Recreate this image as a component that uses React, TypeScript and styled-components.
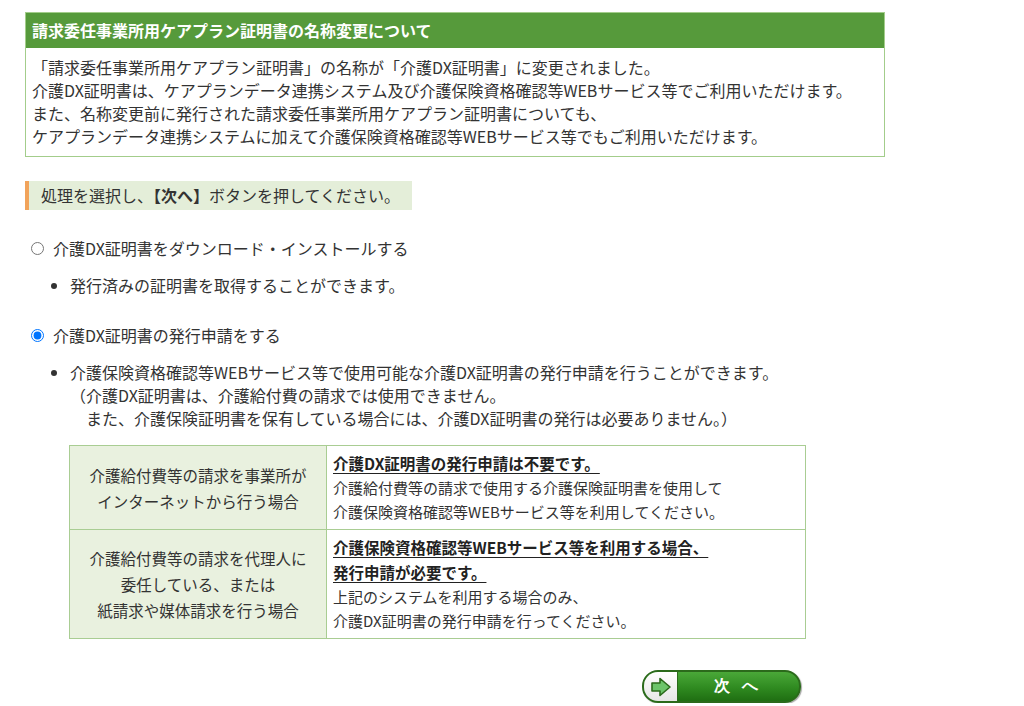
import styled, { createGlobalStyle } from "styled-components";

const GlobalStyle = createGlobalStyle`
  body {
    margin: 0;
    background: #fff;
    color: #333;
    font-family: "Noto Sans CJK JP", "Noto Sans", sans-serif;
    font-size: 16px;
  }
`;

const Page = styled.div`
  padding: 12px 0 0 25px;
  width: 860px;
`;

const Notice = styled.section`
  border: 1px solid #a3cd8b;
`;

const NoticeTitle = styled.h2`
  margin: 0;
  background: #569a3b;
  color: #fff;
  font-size: 16px;
  font-weight: bold;
  height: 35px;
  line-height: 35px;
  padding: 0 6px;
`;

const NoticeBody = styled.div`
  padding: 8px 6px 8px;
  line-height: 23px;
  font-size: 16px;
`;

const Guide = styled.div`
  margin-top: 24px;
  width: 371px;
  height: 29px;
  line-height: 29px;
  background: #e4eed9;
  border-left: 4px solid #f1a35b;
  padding-left: 12px;
  font-size: 16px;
  b { font-weight: bold; }
`;

const Choice = styled.label`
  display: flex;
  align-items: center;
  gap: 9px;
  margin: 26px 0 0 6px;
  font-size: 16px;
  line-height: 24px;
  input {
    margin: 0;
    width: 13px;
    height: 13px;
  }
`;

const Notes = styled.ul`
  margin: 14px 0 0;
  padding-left: 45px;
  font-size: 16px;
  line-height: 23px;
`;

const Sub = styled.span<{ $indent: number }>`
  display: block;
  padding-left: ${p => p.$indent}px;
`;

const Table = styled.table`
  margin: 15px 0 0 44px;
  border-collapse: collapse;
  width: 737px;
  font-size: 15px;
  td {
    border: 1px solid #a9cd93;
  }
`;

const Case = styled.td`
  width: 248px;
  background: #e9f1df;
  text-align: center;
  vertical-align: middle;
  font-size: 15.5px;
  line-height: 26px;
  padding: 3px 4px;
`;

const Answer = styled.td`
  padding: 5px 6px 5px;
  line-height: 24px;
  vertical-align: top;
  strong {
    display: inline;
    font-weight: bold;
    font-size: 15.5px;
    text-decoration: underline;
    text-underline-offset: 3px;
    color: #222;
  }
`;

const Footer = styled.div`
  width: 776px;
  display: flex;
  justify-content: flex-end;
  margin-top: 31px;
`;

const NextButton = styled.button`
  display: flex;
  align-items: stretch;
  width: 159px;
  height: 33px;
  padding: 0;
  border: 2px solid #2b6a1b;
  border-radius: 16px;
  overflow: hidden;
  cursor: pointer;
  background: linear-gradient(#4aa838, #2f8a20 55%, #1f6e12);
  box-shadow: 1px 1px 1px rgba(0, 0, 0, 0.35);
`;

const ArrowPart = styled.span`
  width: 33px;
  display: flex;
  align-items: center;
  justify-content: center;
  background: linear-gradient(#ffffff, #e6e6e6);
  border-right: 1px solid #2b6a1b;
`;

const Label = styled.span`
  flex: 1;
  display: flex;
  align-items: center;
  justify-content: center;
  gap: 12px;
  color: #fff;
  font-weight: bold;
  font-size: 16px;
  padding-right: 6px;
`;

export default function App() {
  return (
    <Page>
      <GlobalStyle />
      <Notice>
        <NoticeTitle>請求委任事業所用ケアプラン証明書の名称変更について</NoticeTitle>
        <NoticeBody>
          「請求委任事業所用ケアプラン証明書」の名称が「介護DX証明書」に変更されました。<br />
          介護DX証明書は、ケアプランデータ連携システム及び介護保険資格確認等WEBサービス等でご利用いただけます。<br />
          また、名称変更前に発行された請求委任事業所用ケアプラン証明書についても、<br />
          ケアプランデータ連携システムに加えて介護保険資格確認等WEBサービス等でもご利用いただけます。
        </NoticeBody>
      </Notice>

      <Guide>処理を選択し、<b>【次へ】</b>ボタンを押してください。</Guide>

      <Choice>
        <input type="radio" name="proc" />
        介護DX証明書をダウンロード・インストールする
      </Choice>
      <Notes>
        <li>発行済みの証明書を取得することができます。</li>
      </Notes>

      <Choice>
        <input type="radio" name="proc" defaultChecked />
        介護DX証明書の発行申請をする
      </Choice>
      <Notes>
        <li>
          介護保険資格確認等WEBサービス等で使用可能な介護DX証明書の発行申請を行うことができます。
          <Sub $indent={0}>（介護DX証明書は、介護給付費の請求では使用できません。</Sub>
          <Sub $indent={16}>また、介護保険証明書を保有している場合には、介護DX証明書の発行は必要ありません。）</Sub>
        </li>
      </Notes>

      <Table>
        <tbody>
          <tr>
            <Case>介護給付費等の請求を事業所が<br />インターネットから行う場合</Case>
            <Answer>
              <strong>介護DX証明書の発行申請は不要です。</strong><br />
              介護給付費等の請求で使用する介護保険証明書を使用して<br />
              介護保険資格確認等WEBサービス等を利用してください。
            </Answer>
          </tr>
          <tr>
            <Case>介護給付費等の請求を代理人に<br />委任している、または<br />紙請求や媒体請求を行う場合</Case>
            <Answer>
              <strong>介護保険資格確認等WEBサービス等を利用する場合、</strong><br />
              <strong>発行申請が必要です。</strong><br />
              上記のシステムを利用する場合のみ、<br />
              介護DX証明書の発行申請を行ってください。
            </Answer>
          </tr>
        </tbody>
      </Table>

      <Footer>
        <NextButton type="button">
          <ArrowPart>
            <svg width="22" height="20" viewBox="0 0 22 20">
              <path d="M2 6h8V1.5L20 10l-10 8.5V14H2z" fill="#6cc46a" stroke="#2b6a1b" strokeWidth="1.6" strokeLinejoin="round" />
            </svg>
          </ArrowPart>
          <Label><span>次</span><span>へ</span></Label>
        </NextButton>
      </Footer>
    </Page>
  );
}
